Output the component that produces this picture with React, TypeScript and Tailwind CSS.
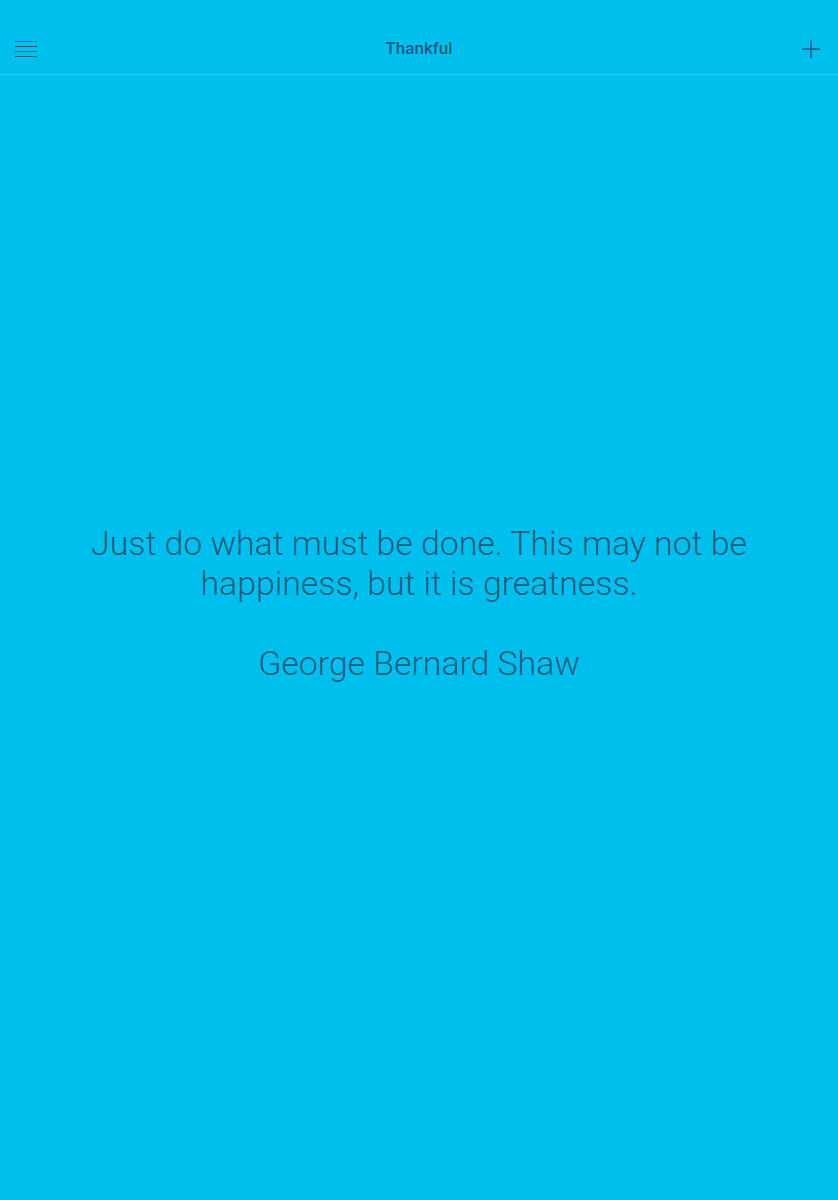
import React from 'react';

function MenuIcon() {
  return (
    <svg width="22" height="18" viewBox="0 0 22 18" fill="none" stroke="#1f5f82" strokeWidth="1">
      <line x1="0" y1="1.5" x2="22" y2="1.5" />
      <line x1="0" y1="6.5" x2="22" y2="6.5" />
      <line x1="0" y1="11.5" x2="22" y2="11.5" />
      <line x1="0" y1="16.5" x2="22" y2="16.5" />
    </svg>
  );
}

function PlusIcon() {
  return (
    <svg width="20" height="20" viewBox="0 0 20 20" fill="none" stroke="#1f5f82" strokeWidth="1.5">
      <line x1="10" y1="1" x2="10" y2="19" />
      <line x1="1" y1="10" x2="19" y2="10" />
    </svg>
  );
}

export default function App() {
  return (
    <div className="flex min-h-[1200px] flex-col bg-[#00bfee] text-[#1f5f82] font-['Roboto','Liberation_Sans',sans-serif]">
      {/* top bar, below the status bar */}
      <header className="flex h-[75px] shrink-0 items-center justify-between border-b border-[#2ac8f0] pl-[15px] pr-[17px] pt-[24px]">
        <button className="flex items-center">
          <MenuIcon />
        </button>
        <h1 className="text-[17px] font-medium">Thankful</h1>
        <button className="flex items-center">
          <PlusIcon />
        </button>
      </header>

      {/* quote */}
      <main className="flex flex-1 flex-col items-center justify-center pb-[70px] text-center">
        <p className="text-[34px] font-light leading-[40px] tracking-[-0.1px]">
          Just do what must be done. This may not be
          <br />
          happiness, but it is greatness.
        </p>
        <p className="mt-[40px] text-[34px] font-light leading-[40px] tracking-[-0.1px]">George Bernard Shaw</p>
      </main>
    </div>
  );
}
